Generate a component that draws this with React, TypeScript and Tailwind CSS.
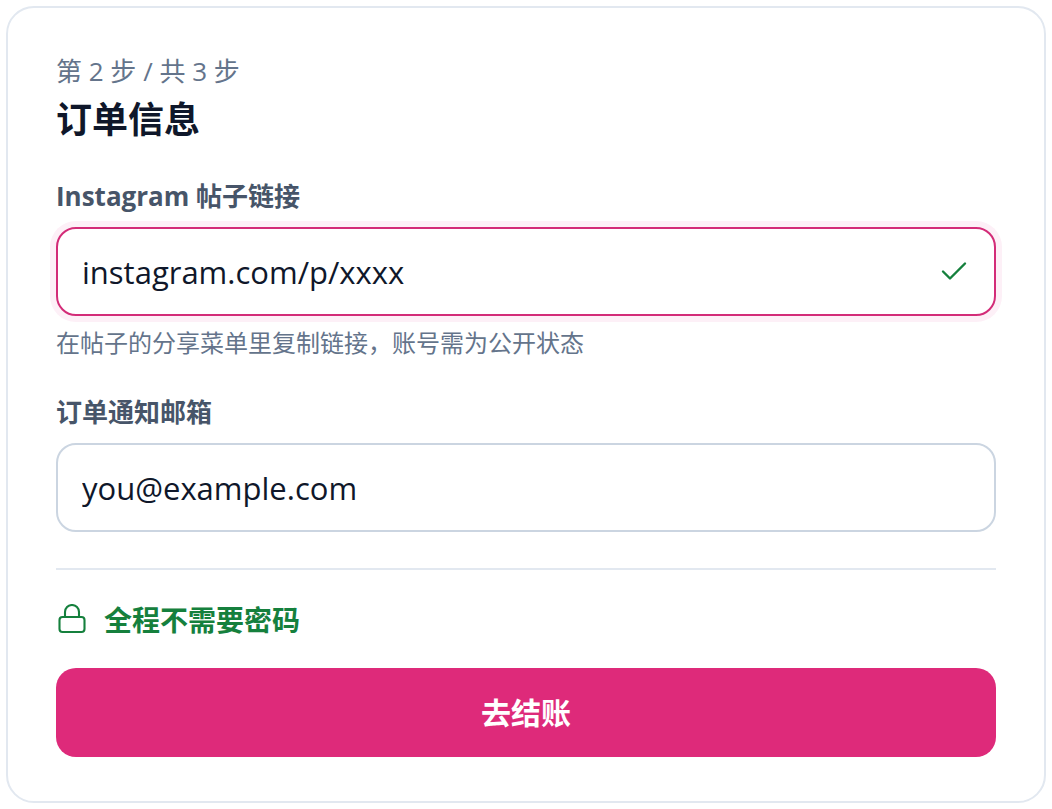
import { useState } from "react";
import type { FormEvent, InputHTMLAttributes, ReactNode } from "react";

type FieldProps = InputHTMLAttributes<HTMLInputElement> & {
  id: string;
  label: string;
  hint?: string;
  valid?: boolean;
};

function Field({ id, label, hint, valid = false, ...input }: FieldProps) {
  return (
    <div className="flex flex-col">
      <label htmlFor={id} className="text-[26px] leading-9 font-bold text-[#475569]">
        {label}
      </label>
      <div
        className={
          valid
            ? "mt-[13px] flex h-[89px] items-center gap-4 rounded-[20px] border-2 border-[#d32c78] bg-white px-6 shadow-[0_0_0_6px_#fdf0f7]"
            : "mt-[13px] flex h-[89px] items-center gap-4 rounded-[20px] border-2 border-[#cbd5e1] bg-white px-6"
        }
      >
        <input
          id={id}
          aria-describedby={hint ? `${id}-hint` : undefined}
          className="h-12 min-w-0 flex-1 bg-transparent text-[31px] text-[#0f172a] outline-none"
          {...input}
        />
        {valid && <CheckIcon />}
      </div>
      {hint && (
        <p id={`${id}-hint`} className="mt-[9px] text-2xl leading-9 text-[#64748b]">
          {hint}
        </p>
      )}
    </div>
  );
}

function CheckIcon() {
  return (
    <svg
      viewBox="0 0 32 32"
      className="size-8 shrink-0 text-[#15803d]"
      fill="none"
      stroke="currentColor"
      strokeWidth="2.4"
      strokeLinecap="round"
      strokeLinejoin="round"
      aria-hidden="true"
    >
      <path d="M5 15.5 12 22.5 27 7.5" />
    </svg>
  );
}

function LockIcon() {
  return (
    <svg
      viewBox="0 0 32 32"
      className="size-8 shrink-0"
      fill="none"
      stroke="currentColor"
      strokeWidth="2.1"
      strokeLinecap="round"
      strokeLinejoin="round"
      aria-hidden="true"
    >
      <rect x="3.5" y="13" width="25" height="15" rx="3" />
      <path d="M9 13V8a7 7 0 0 1 14 0V13" />
    </svg>
  );
}

function Notice({ children }: { children: ReactNode }) {
  return (
    <p className="flex items-center gap-4 text-[28px] leading-10 font-bold text-[#15803d]">
      <LockIcon />
      {children}
    </p>
  );
}

export default function App() {
  const [link, setLink] = useState("instagram.com/p/xxxx");
  const [email, setEmail] = useState("you@example.com");

  const submit = (event: FormEvent) => event.preventDefault();

  return (
    <main className="bg-white p-1.5 font-['Open_Sans','Noto_Sans_CJK_SC',sans-serif]">
      <form
        onSubmit={submit}
        className="flex flex-col rounded-[28px] border-2 border-[#e2e8f0] bg-white px-12 pt-[45px] pb-11"
      >
        <p className="text-[26px] leading-9 text-[#64748b]">第 2 步 / 共 3 步</p>
        <h1 className="mt-[7px] text-4xl leading-12 font-bold text-[#0f172a]">订单信息</h1>
        <div className="mt-[34px] flex flex-col gap-[33px]">
          <Field
            id="post-link"
            label="Instagram 帖子链接"
            hint="在帖子的分享菜单里复制链接，账号需为公开状态"
            type="text"
            value={link}
            onChange={(e) => setLink(e.target.value)}
            valid
          />
          <Field
            id="email"
            label="订单通知邮箱"
            type="email"
            value={email}
            onChange={(e) => setEmail(e.target.value)}
          />
        </div>
        <div className="mt-9 flex flex-col gap-7 border-t-2 border-[#e2e8f0] pt-[30px]">
          <Notice>全程不需要密码</Notice>
          <button
            type="submit"
            className="h-[89px] w-full cursor-pointer rounded-[20px] bg-[#de2a7a] text-3xl font-bold text-white"
          >
            去结账
          </button>
        </div>
      </form>
    </main>
  );
}
